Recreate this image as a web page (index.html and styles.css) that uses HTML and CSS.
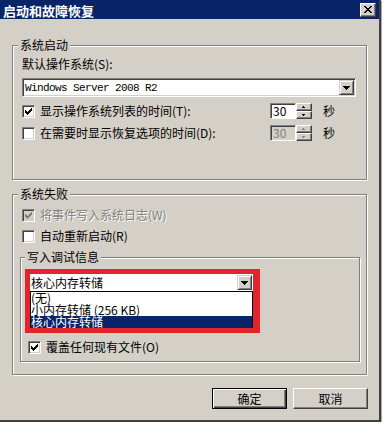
FILE: index.html
```html
<!DOCTYPE html>
<html lang="zh-CN">
<head>
    <meta charset="UTF-8">
    <title>启动和故障恢复</title>
    <link rel="stylesheet" href="styles.css">
</head>
<body>
    <div class="window">
        <div class="titlebar">
            <span class="title">启动和故障恢复</span>
            <span class="close">
                <svg width="8" height="7" viewBox="0 0 8 7"><path d="M0 0h2v1h-2zM6 0h2v1h-2zM1 1h2v1h-2zM5 1h2v1h-2zM2 2h4v1h-4zM3 3h2v1h-2zM2 4h4v1h-4zM1 5h2v1h-2zM5 5h2v1h-2zM0 6h2v1h-2zM6 6h2v1h-2z" fill="#000"/></svg>
            </span>
        </div>

        <div class="content">
            <fieldset class="group startup">
                <legend>系统启动</legend>
                <div class="label">默认操作系统(S):</div>
                <div class="combo">
                    <span class="combo-value mono">Windows Server 2008 R2</span>
                    <span class="drop-btn"><svg width="7" height="4" viewBox="0 0 7 4"><path d="M0 0h7v1h-1v1h-1v1h-1v1h-1v-1h-1v-1h-1v-1h-1z" fill="#000"/></svg></span>
                </div>
                <div class="row">
                    <span class="check"><svg width="7" height="7" viewBox="0 0 7 7"><path d="M0 2h1v1h1v1h1v-1h1v-1h1v-1h1v-1h1v3h-1v1h-1v1h-1v1h-1v1h-1v-1h-1v-1h-1z" fill="#000"/></svg></span>
                    <span class="text">显示操作系统列表的时间(T):</span>
                    <span class="spin">
                        <span class="spin-field">30</span>
                        <span class="spin-btns">
                            <span class="spin-btn"><svg width="3" height="2" viewBox="0 0 3 2"><path d="M1 0h1v1h1v1h-3v-1h1z" fill="#000"/></svg></span>
                            <span class="spin-btn"><svg width="3" height="2" viewBox="0 0 3 2"><path d="M0 0h3v1h-1v1h-1v-1h-1z" fill="#000"/></svg></span>
                        </span>
                    </span>
                    <span class="unit">秒</span>
                </div>
                <div class="row">
                    <span class="check"></span>
                    <span class="text">在需要时显示恢复选项的时间(D):</span>
                    <span class="spin disabled">
                        <span class="spin-field">30</span>
                        <span class="spin-btns">
                            <span class="spin-btn"><svg width="3" height="2" viewBox="0 0 3 2"><path d="M1 0h1v1h1v1h-3v-1h1z" fill="#808080"/></svg></span>
                            <span class="spin-btn"><svg width="3" height="2" viewBox="0 0 3 2"><path d="M0 0h3v1h-1v1h-1v-1h-1z" fill="#808080"/></svg></span>
                        </span>
                    </span>
                    <span class="unit">秒</span>
                </div>
            </fieldset>

            <fieldset class="group failure">
                <legend>系统失败</legend>
                <div class="row disabled">
                    <span class="check"><svg width="7" height="7" viewBox="0 0 7 7"><path d="M0 2h1v1h1v1h1v-1h1v-1h1v-1h1v-1h1v3h-1v1h-1v1h-1v1h-1v1h-1v-1h-1v-1h-1z" fill="#808080"/></svg></span>
                    <span class="text">将事件写入系统日志(W)</span>
                </div>
                <div class="row">
                    <span class="check"></span>
                    <span class="text">自动重新启动(R)</span>
                </div>

                <fieldset class="group sub">
                    <legend>写入调试信息</legend>
                    <div class="highlight">
                        <div class="combo open">
                            <span class="combo-value">核心内存转储</span>
                            <span class="drop-btn"><svg width="7" height="4" viewBox="0 0 7 4"><path d="M0 0h7v1h-1v1h-1v1h-1v1h-1v-1h-1v-1h-1v-1h-1z" fill="#000"/></svg></span>
                        </div>
                        <div class="list">
                            <div class="item">(无)</div>
                            <div class="item">小内存转储 (256 KB)</div>
                            <div class="item selected">核心内存转储</div>
                        </div>
                    </div>
                    <div class="row overwrite">
                        <span class="check"><svg width="7" height="7" viewBox="0 0 7 7"><path d="M0 2h1v1h1v1h1v-1h1v-1h1v-1h1v-1h1v3h-1v1h-1v1h-1v1h-1v1h-1v-1h-1v-1h-1z" fill="#000"/></svg></span>
                        <span class="text">覆盖任何现有文件(O)</span>
                    </div>
                </fieldset>
            </fieldset>

            <div class="buttons">
                <button class="default">确定</button>
                <button>取消</button>
            </div>
        </div>
    </div>
</body>
</html>
```

FILE: styles.css
```css
* {
    box-sizing: border-box;
}

body {
    margin: 0;
    background-color: #fff;
    font-family: "Noto Sans CJK SC", sans-serif;
    font-size: 12px;
    color: #000;
}

.window {
    width: 381px;
    height: 422px;
    background-color: #d4d0c8;
    border-right: 2px solid #404040;
    border-bottom: 2px solid #404040;
    box-shadow: 1px 1px 0 #a8a8a8;
}

.titlebar {
    display: flex;
    align-items: center;
    height: 19px;
    padding: 0 3px;
    background-color: #0a246a;
}

.title {
    padding-top: 2px;
    color: #fff;
    font-size: 13px;
    font-weight: bold;
    line-height: 17px;
}

.close {
    display: flex;
    align-items: center;
    justify-content: center;
    width: 16px;
    height: 14px;
    margin-left: auto;
    background-color: #d4d0c8;
    border: 1px solid;
    border-color: #fff #404040 #404040 #fff;
    box-shadow: inset -1px -1px 0 #808080;
}

.content {
    padding: 19px 0 0 12px;
}

.group {
    width: 355px;
    min-width: 0;
    margin: 0;
    padding: 0 10px 0 9px;
    border: 1px solid #808080;
    box-shadow: inset 1px 1px 0 #fff, 1px 1px 0 #fff;
}

.group legend {
    margin-left: -4px;
    padding: 0 2px;
    line-height: 14px;
    background-color: #d4d0c8;
}

.startup {
    padding-top: 5px;
    padding-bottom: 38px;
}

.failure {
    margin-top: 7px;
    padding-top: 6px;
    padding-bottom: 12px;
}

.sub {
    width: 340px;
    margin: 6px 0 0 -2px;
    padding: 5px 0 6px 4px;
}

.sub legend {
    margin-left: 0;
}

.label {
    line-height: 14px;
}

.mono {
    font-family: "Liberation Mono", monospace;
    font-size: 11px;
    letter-spacing: -0.6px;
}

.combo {
    display: flex;
    align-items: center;
    width: 334px;
    height: 19px;
    margin-top: 7px;
    background-color: #fff;
    border: 1px solid;
    border-color: #808080 #fff #fff #808080;
    box-shadow: inset 1px 1px 0 #404040, inset -1px -1px 0 #d4d0c8;
}

.combo-value {
    padding-left: 2px;
    line-height: 14px;
}

.drop-btn {
    display: flex;
    align-items: center;
    justify-content: center;
    width: 15px;
    height: 15px;
    margin-left: auto;
    margin-right: 1px;
    background-color: #d4d0c8;
    border: 1px solid;
    border-color: #d4d0c8 #404040 #404040 #d4d0c8;
    box-shadow: inset 1px 1px 0 #fff, inset -1px -1px 0 #808080;
}

.row {
    display: flex;
    align-items: center;
    height: 16px;
    margin-top: 6px;
    padding-right: 21px;
    line-height: 14px;
}

.failure > .row + .row {
    margin-top: 5px;
}

.failure > .row:first-of-type {
    margin-top: 0;
}

.check {
    display: flex;
    align-items: center;
    justify-content: center;
    flex: none;
    width: 13px;
    height: 13px;
    background-color: #fff;
    border: 1px solid;
    border-color: #808080 #fff #fff #808080;
    box-shadow: inset 1px 1px 0 #404040, inset -1px -1px 0 #d4d0c8;
}

.row .text {
    margin-left: 5px;
}

.row.disabled .check {
    background-color: #d4d0c8;
}

.row.disabled .text {
    color: #808080;
    text-shadow: 1px 1px 0 #fff;
}

.spin {
    display: flex;
    margin-left: auto;
    height: 16px;
}

.spin-field {
    width: 26px;
    height: 16px;
    padding-left: 2px;
    line-height: 14px;
    background-color: #fff;
    border: 1px solid;
    border-color: #808080 #fff #fff #808080;
    box-shadow: inset 1px 1px 0 #404040;
}

.spin.disabled .spin-field {
    color: #808080;
    background-color: #d4d0c8;
}

.spin-btns {
    display: flex;
    flex-direction: column;
    width: 16px;
}

.spin-btn {
    display: flex;
    align-items: center;
    justify-content: center;
    height: 8px;
    background-color: #d4d0c8;
    border: 1px solid;
    border-color: #fff #404040 #404040 #fff;
    box-shadow: inset -1px -1px 0 #808080;
}

.unit {
    margin-left: 11px;
}

.highlight {
    width: 235px;
    border: 5px solid #e3242b;
    border-right-width: 7px;
}

.combo.open {
    width: 223px;
    height: 17px;
    margin-top: 0;
    border: none;
    box-shadow: none;
}

.combo.open .combo-value {
    padding-left: 1px;
}

.combo.open .drop-btn {
    margin-right: 1px;
}

.list {
    border: 1px solid #000;
    border-bottom: none;
    background-color: #fff;
}

.item {
    height: 12px;
    line-height: 12px;
    white-space: nowrap;
}

.item.selected {
    background-color: #0a246a;
    color: #fff;
}

.overwrite {
    padding-left: 3px;
}

.buttons {
    display: flex;
    justify-content: flex-end;
    gap: 6px;
    width: 356px;
    margin-top: 13px;
}

button {
    width: 75px;
    height: 21px;
    padding: 0;
    font-family: "Noto Sans CJK SC", sans-serif;
    font-size: 12px;
    line-height: 14px;
    color: #000;
    background-color: #d4d0c8;
    border: 1px solid;
    border-color: #fff #404040 #404040 #fff;
    box-shadow: inset -1px -1px 0 #808080;
}

button.default {
    border-color: #000;
    box-shadow: inset 1px 1px 0 #fff, inset -1px -1px 0 #404040, inset -2px -2px 0 #808080;
}
```
